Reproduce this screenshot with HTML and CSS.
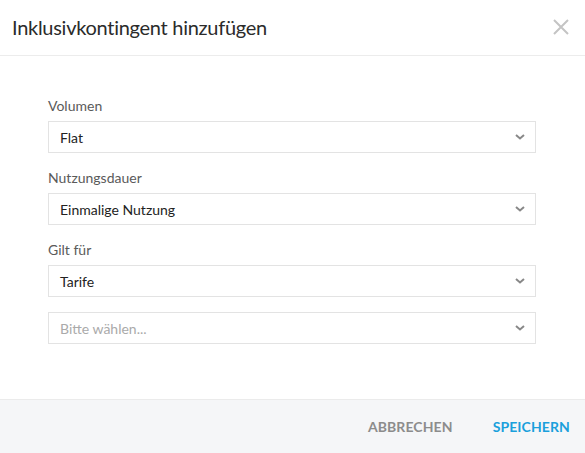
FILE: index.html
```html
<!DOCTYPE html>
<html lang="de">
<head>
<meta charset="utf-8">
<link rel="stylesheet" href="styles.css">
</head>
<body>
<div class="dialog">
  <div class="header">
    <h1 class="title">Inklusivkontingent hinzufügen</h1>
    <span class="close" aria-label="Schließen">
      <svg width="16" height="16" viewBox="0 0 16 16"><path d="M1 1L15 15M15 1L1 15" stroke="#c4c4c4" stroke-width="2" fill="none"/></svg>
    </span>
  </div>
  <div class="body">
    <div class="field">
      <label class="label">Volumen</label>
      <div class="select"><span>Flat</span><svg class="chev" width="10" height="6" viewBox="0 0 10 6"><path d="M1 1L5 4.5L9 1" stroke="#888" stroke-width="2" fill="none"/></svg></div>
    </div>
    <div class="field">
      <label class="label">Nutzungsdauer</label>
      <div class="select"><span>Einmalige Nutzung</span><svg class="chev" width="10" height="6" viewBox="0 0 10 6"><path d="M1 1L5 4.5L9 1" stroke="#888" stroke-width="2" fill="none"/></svg></div>
    </div>
    <div class="field">
      <label class="label">Gilt für</label>
      <div class="select"><span>Tarife</span><svg class="chev" width="10" height="6" viewBox="0 0 10 6"><path d="M1 1L5 4.5L9 1" stroke="#888" stroke-width="2" fill="none"/></svg></div>
      <div class="select second"><span class="placeholder">Bitte wählen...</span><svg class="chev" width="10" height="6" viewBox="0 0 10 6"><path d="M1 1L5 4.5L9 1" stroke="#888" stroke-width="2" fill="none"/></svg></div>
    </div>
  </div>
  <div class="footer">
    <button class="btn cancel">ABBRECHEN</button>
    <button class="btn save">SPEICHERN</button>
  </div>
</div>
</body>
</html>
```

FILE: styles.css
```css
* { box-sizing: border-box; }
html, body { margin: 0; padding: 0; background: #fff; }
body { font-family: Lato, "Noto Sans", sans-serif; color: #333; }
.dialog { width: 585px; height: 453px; display: flex; flex-direction: column; }
.header {
  height: 56px;
  border-bottom: 1px solid #ececec;
  display: flex;
  align-items: center;
  justify-content: space-between;
  padding: 0 16px 2px 12px;
}
.title { margin: 0; font-size: 20px; font-weight: 400; color: #2b2b2b; letter-spacing: -0.28px; }
.close { display: flex; width: 16px; height: 16px; }
.body { flex: 1; padding: 42px 49px 0 48px; }
.field { margin-bottom: 17px; }
.label { display: block; font-size: 14px; color: #5a5a5a; line-height: 16px; margin-bottom: 7px; }
.select {
  height: 32px;
  border: 1px solid #e3e3e3;
  display: flex;
  align-items: center;
  justify-content: space-between;
  padding: 0 10px 0 11px;
  font-size: 14px;
  color: #222;
}
.select.second { margin-top: 15px; }
.placeholder { color: #aaa; }
.chev { display: block; }
.footer {
  height: 54px;
  background: #f5f6f8;
  border-top: 1px solid #ebebeb;
  display: flex;
  justify-content: flex-end;
  align-items: center;
  gap: 40px;
  padding: 0 15px 0 0;
}
.btn {
  border: 0; background: none; padding: 0; cursor: pointer;
  font-family: Lato, "Noto Sans", sans-serif;
  font-size: 14px; font-weight: 700; letter-spacing: 0.1px;
}
.cancel { color: #8c8c8c; }
.save { color: #1aa0dc; }
```
